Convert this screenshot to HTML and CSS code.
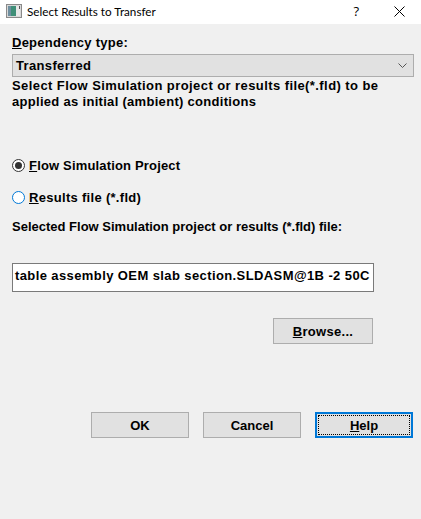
FILE: index.html
```html
<!DOCTYPE html>
<html>
<head>
<meta charset="utf-8">
<link rel="stylesheet" href="styles.css">
</head>
<body>
<div class="window">
  <div class="titlebar">
    <svg class="app-icon" width="16" height="14" viewBox="0 0 16 14">
      <rect x="0.5" y="0.5" width="15" height="13" fill="#d8d8d8" stroke="#8a8a8a"/>
      <rect x="2" y="2" width="3" height="10" fill="#6f8fa0"/>
      <rect x="5" y="2" width="5" height="10" fill="#3f8f78"/>
      <rect x="10" y="2" width="4" height="10" fill="#e8e8e8"/>
      <rect x="13" y="2" width="1" height="3" fill="#555"/>
    </svg>
    <span class="title">Select Results to Transfer</span>
    <span class="tb-help">?</span>
    <svg class="tb-close" width="11" height="11" viewBox="0 0 11 11">
      <path d="M0.5 0.5 L10.5 10.5 M10.5 0.5 L0.5 10.5" stroke="#000" stroke-width="1"/>
    </svg>
  </div>
  <div class="content">
    <div class="label dep"><u>D</u>ependency type:</div>
    <div class="select">
      <span class="sel-text">Transferred</span>
      <svg width="9" height="5" viewBox="0 0 9 5"><path d="M0.5 0.5 L4.5 4.5 L8.5 0.5" fill="none" stroke="#555" stroke-width="1"/></svg>
    </div>
    <div class="desc"><span class="d1">Select Flow Simulation project or results file(*.fld) to be</span><br><span class="d2">applied as initial (ambient) conditions</span></div>
    <div class="radio-row first">
      <span class="radio checked"></span>
      <span class="label r1"><u>F</u>low Simulation Project</span>
    </div>
    <div class="radio-row second">
      <span class="radio hover"></span>
      <span class="label r2"><u>R</u>esults file (*.fld)</span>
    </div>
    <div class="label sel">Selected Flow Simulation project or results (*.fld) file:</div>
    <div class="input">table assembly OEM slab section.SLDASM@1B -2 50C</div>
    <div class="browse-row">
      <div class="btn browse"><u>B</u>rowse...</div>
    </div>
    <div class="buttons">
      <div class="btn">OK</div>
      <div class="btn">Cancel</div>
      <div class="btn default"><span class="focus"><u>H</u>elp</span></div>
    </div>
  </div>
</div>
</body>
</html>
```

FILE: styles.css
```css
html, body {
  margin: 0;
  padding: 0;
  background: #f0f0f0;
}
.window {
  width: 421px;
  height: 519px;
  background: #f0f0f0;
  font-family: "Liberation Sans", Arial, sans-serif;
  font-weight: bold;
  font-size: 13px;
  color: #000;
  overflow: hidden;
}
.titlebar {
  height: 24px;
  background: #fff;
  display: flex;
  align-items: center;
  font-family: "Lato", "Open Sans", sans-serif;
  font-weight: normal;
  font-size: 11.7px;
}
.app-icon {
  margin-left: 6px;
  margin-top: -2px;
}
.title {
  margin-left: 5px;
  flex: 1;
  margin-top: -2px;
}
.tb-help {
  font-family: "Open Sans", sans-serif;
  font-size: 13px;
  margin-right: 35px;
  margin-top: -2px;
}
.tb-close {
  margin-right: 16px;
  margin-top: -2px;
}
.content {
  padding: 0 7px 0 12px;
}
.label {
  white-space: nowrap;
}
.dep {
  margin-top: 11px;
  line-height: 16px;
  letter-spacing: 0.25px;
}
.select {
  margin-top: 3px;
  height: 21px;
  border: 1px solid #adadad;
  background: #e1e1e1;
  display: flex;
  align-items: center;
  justify-content: space-between;
  padding: 0 6px 0 3px;
}
.sel-text {
  letter-spacing: 0.35px;
}
.desc {
  line-height: 16px;
  margin-top: 1px;
  white-space: nowrap;
}
.d1 {
  letter-spacing: 0.42px;
}
.d2 {
  letter-spacing: 0.3px;
}
.radio-row {
  display: flex;
  align-items: center;
  height: 16px;
}
.radio-row.first {
  margin-top: 47px;
}
.radio-row.second {
  margin-top: 16px;
}
.r1 {
  letter-spacing: 0.17px;
}
.r2 {
  letter-spacing: 0.3px;
}
.radio {
  width: 11px;
  height: 11px;
  border: 1px solid #333;
  border-radius: 50%;
  background: #fff;
  margin-right: 4px;
  position: relative;
  box-sizing: content-box;
}
.radio.checked::after {
  content: "";
  position: absolute;
  left: 2px;
  top: 2px;
  width: 7px;
  height: 7px;
  border-radius: 50%;
  background: #333;
}
.radio.hover {
  border-color: #0078d7;
}
.sel {
  margin-top: 14px;
  line-height: 16px;
}
.input {
  margin-top: 28px;
  width: 358px;
  height: 23px;
  padding: 0 0 4px 2px;
  border: 1px solid #7a7a7a;
  background: #fff;
  display: flex;
  align-items: center;
  white-space: nowrap;
  overflow: hidden;
  box-sizing: content-box;
  letter-spacing: 0.4px;
}
.browse-row {
  display: flex;
  justify-content: flex-end;
  width: 361px;
  margin-top: 26px;
}
.btn {
  box-sizing: border-box;
  width: 98px;
  height: 26px;
  border: 1px solid #adadad;
  background: #e1e1e1;
  display: flex;
  align-items: center;
  justify-content: center;
}
.btn.browse {
  width: 100px;
  letter-spacing: 0.3px;
}
.buttons {
  display: flex;
  gap: 14px;
  margin-top: 68px;
  margin-left: 79px;
}
.btn.default {
  border: 2px solid #0078d7;
  padding: 1px;
}
.focus {
  flex: 1;
  align-self: stretch;
  border: 1px dotted #000;
  display: flex;
  align-items: center;
  justify-content: center;
}
```
